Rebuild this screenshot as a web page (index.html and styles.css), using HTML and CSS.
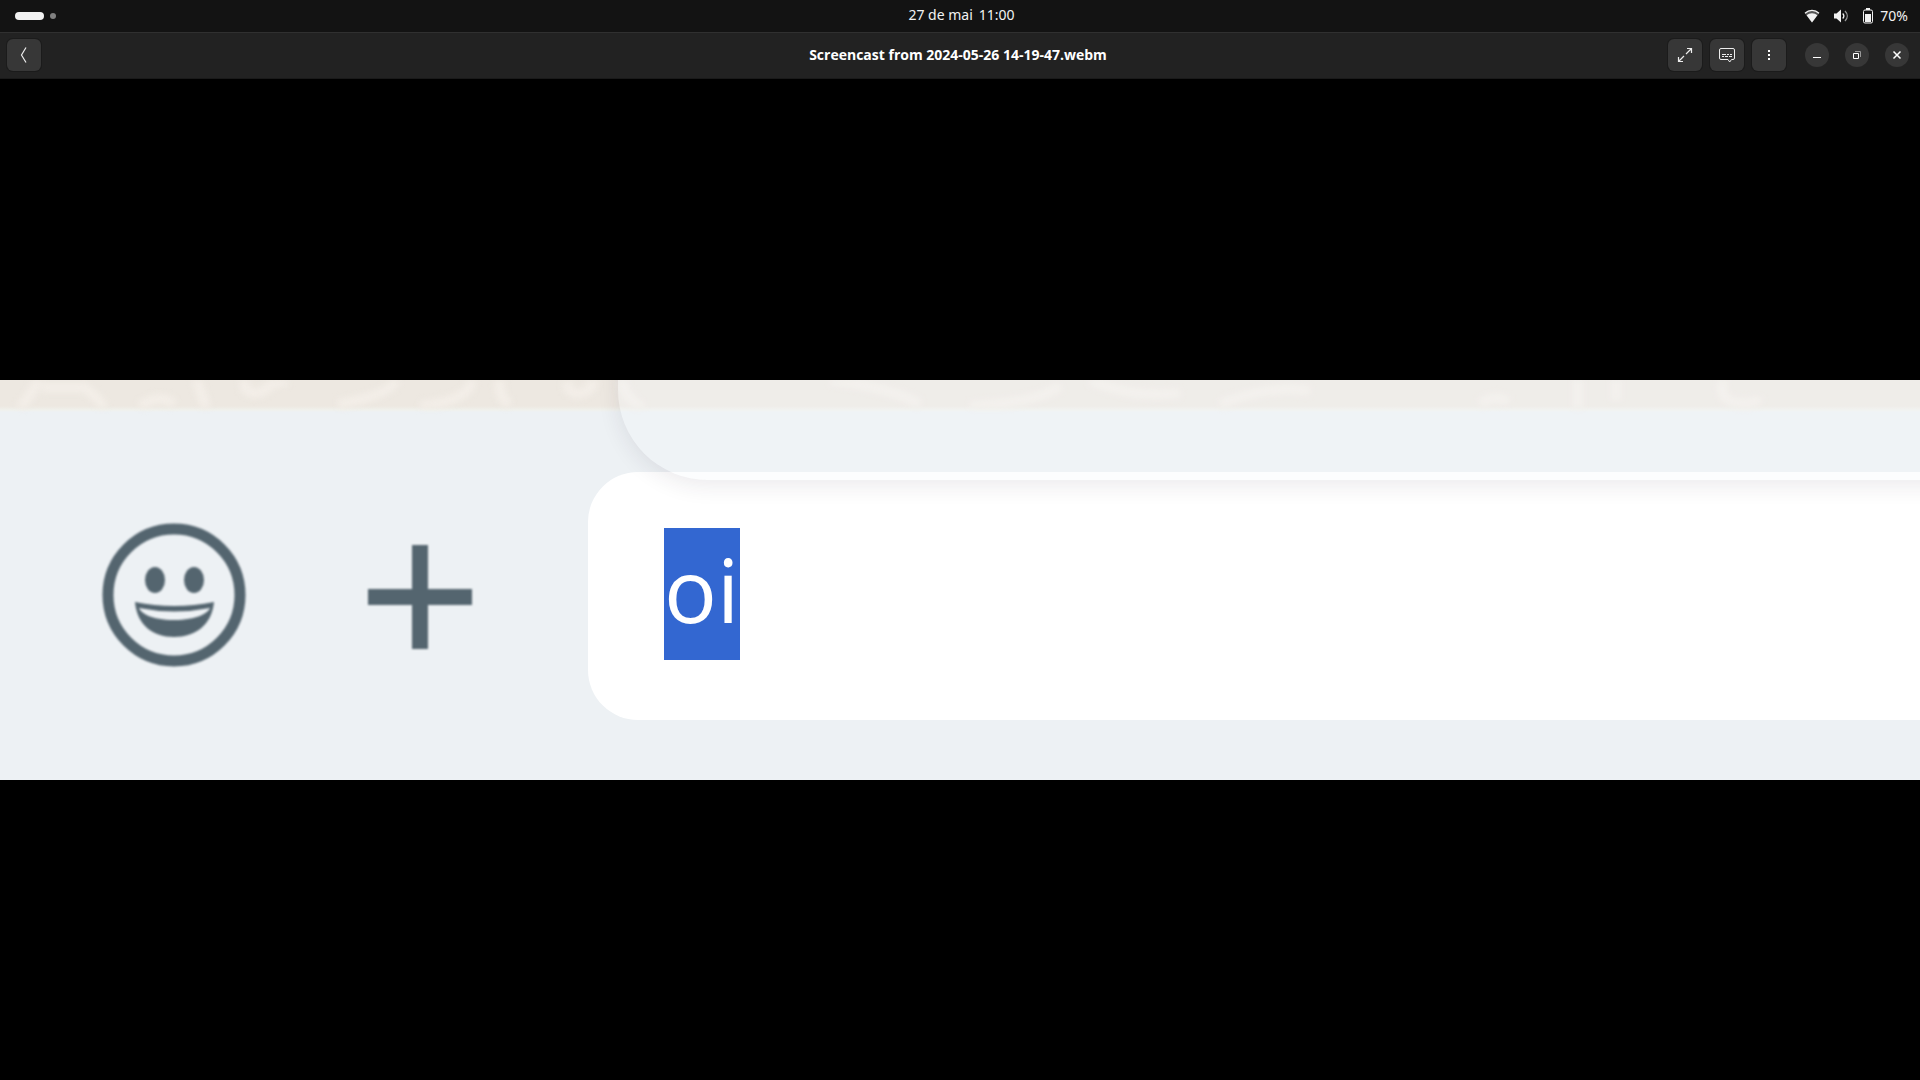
FILE: index.html
```html
<!DOCTYPE html>
<html lang="pt-BR">
<head>
    <meta charset="UTF-8" />
    <title>Screencast from 2024-05-26 14-19-47.webm</title>
    <meta name="viewport" content="width=device-width, initial-scale=1.0" />
    <link rel="stylesheet" href="styles.css">
</head>
<body>

    <div class="panel">
        <button class="workspaces" aria-label="Workspaces">
            <span class="pill"></span>
            <span class="dot"></span>
        </button>
        <button class="clock"><span>27 de mai</span><span>11:00</span></button>
        <button class="status" aria-label="System">
            <svg width="16" height="16" viewBox="0 0 16 16">
                <path d="M8 14.500.8 5.200C2.600 3 5.200 2 8 2s5.400 1 7.200 3.200z" fill="#555" />
                <path d="M8 14.500 2.600 7.200C4 6 6 5.200 8 5.200s4 .8 5.400 2z" fill="#f2f2f2" />
                <path d="M1 5.200C5 1.500 11 1.500 15 5.200" fill="none" stroke="#f2f2f2" stroke-width="1.300" />
            </svg>
            <svg width="16" height="16" viewBox="0 0 16 16">
                <path d="M1 5.500h2.500L8 1.500v13l-4.500-4H1z" fill="#f2f2f2" />
                <path d="M9.700 5.500c1.400 1.500 1.400 3.500 0 5" fill="none" stroke="#f2f2f2" stroke-width="1.300" />
                <path d="M12 3c3 3 3 7 0 10" fill="none" stroke="#999" stroke-width="1.300" />
            </svg>
            <svg width="12" height="16" viewBox="0 0 12 16">
                <path d="M4 0h4v2H4z" fill="#f2f2f2" />
                <rect x="1.500" y="2" width="9" height="13" rx="1.500" fill="none" stroke="#f2f2f2" />
                <path d="M3 6h6v8H3z" fill="#f2f2f2" />
            </svg>
            <span class="percent">70%</span>
        </button>
    </div>

    <header class="titlebar">
        <button class="tool" aria-label="Back">
            <svg width="16" height="16" viewBox="0 0 16 16">
                <path d="M10 0.500 5.500 8l4.500 7.500" fill="none" stroke="#eee" stroke-width="1.200" />
            </svg>
        </button>
        <h1>Screencast from 2024-05-26 14-19-47.webm</h1>
        <div class="actions">
            <button class="tool" aria-label="Fullscreen">
                <svg width="16" height="16" viewBox="0 0 16 16">
                    <path d="M9 7l5.500-5.500M10 1.500h4.500V6M7 9l-5.500 5.500M1.500 10v4.500H6" fill="none" stroke="#eee" stroke-width="1.200" />
                </svg>
            </button>
            <button class="tool" aria-label="Subtitles">
                <svg width="16" height="16" viewBox="0 0 16 16">
                    <path d="M2 1.500h12q1.500 0 1.500 1.500v8q0 1.500-1.500 1.500h-1.500L10.700 15 9 12.500H2Q.5 12.500.5 11V3Q.5 1.500 2 1.500z" fill="none" stroke="#eee" />
                    <path d="M3 7.500h4m1 0h2m1 0h2M3 9.500h2m1 0h3m1 0h3" stroke="#eee" />
                </svg>
            </button>
            <button class="tool" aria-label="Menu">
                <svg width="16" height="16" viewBox="0 0 16 16">
                    <path d="M7 3h2v2H7zM7 7h2v2H7zM7 11h2v2H7z" fill="#fff" />
                </svg>
            </button>
            <div class="window-controls">
                <button aria-label="Minimize">
                    <svg width="16" height="16" viewBox="0 0 16 16"><path d="M4 10h8v1H4z" fill="#fff" /></svg>
                </button>
                <button aria-label="Restore">
                    <svg width="16" height="16" viewBox="0 0 16 16">
                        <path d="M6 4.500h5.500V10" fill="none" stroke="#999" />
                        <path d="M4.500 6.500h5v5h-5z" fill="none" stroke="#fff" />
                    </svg>
                </button>
                <button aria-label="Close">
                    <svg width="16" height="16" viewBox="0 0 16 16"><path d="M4.500 4.500l7 7m0-7l-7 7" stroke="#fff" stroke-width="1.500" /></svg>
                </button>
            </div>
        </div>
    </header>

    <main class="player">
        <div class="video">
            <div class="wallpaper">
                <svg viewBox="0 0 1920 30" preserveAspectRatio="none">
                    <g fill="none" stroke="#f3eee8" stroke-width="10">
                        <path d="M20 30Q34 12 38 0M42 8h46M84 8Q98 18 104 30M140 28q20-14 34-2M196 0q6 14 10 30M244 0q0 14 10 14t14-6 20-6M338 26Q390 16 396 0M420 28Q470 22 472 0M500 0q-2 20 10 26M566 2q4 16 16 12t10-14" />
                        <path d="M622 0q2 20 22 30M830 0Q890 8 920 26M970 28Q1040 24 1060 6M1090 0q40 20 90 14M1220 26q50-22 90-14M1480 26q16-12 28-2M1578 0v30M1616 0v22M1724 0q-8 20 12 24t22-6" />
                    </g>
                </svg>
            </div>
            <div class="composer">
                <div class="buttons">
                    <button aria-label="Emoji">
                        <svg width="148" height="148" viewBox="0 0 148 148" fill="#54656f">
                            <circle cx="74" cy="73" r="66" fill="none" stroke="#54656f" stroke-width="11" />
                            <ellipse cx="55" cy="58" rx="10" ry="13" />
                            <ellipse cx="94" cy="58" rx="10" ry="13" />
                            <path d="M35 80Q74 88 114 80C112 103 95 115 74 115S37 103 35 80zM39 86C41 91 51 98 74 98S108 91 110 86Q74 93 39 86z" fill-rule="evenodd" />
                        </svg>
                    </button>
                    <button aria-label="Attach">
                        <svg width="112" height="112" viewBox="0 0 112 112">
                            <path d="M48 5h16v44h44v16H64v44H48V65H4V49h44z" fill="#54656f" />
                        </svg>
                    </button>
                </div>
                <label class="field">
                    <input class="message" type="text" value="oi" aria-label="Message" spellcheck="false" autocomplete="off">
                </label>
            </div>
            <div class="popup"></div>
        </div>
    </main>

    <script>
        const message = document.querySelector('.message');
        message.focus();
        message.select();
    </script>

</body>
</html>
```
FILE: styles.css
```css
* {
    box-sizing: border-box;
    margin: 0;
    padding: 0;
}

body {
    font-family: "Noto Sans", sans-serif;
    background: #000;
    color: #f2f2f2;
    min-height: 100vh;
    display: flex;
    flex-direction: column;
}

button {
    background: none;
    border: none;
    color: inherit;
    font: inherit;
    display: flex;
    align-items: center;
    justify-content: center;
}

/* Top panel */
.panel {
    display: grid;
    grid-template-columns: 1fr auto 1fr;
    align-items: center;
    height: 32px;
    padding: 0 12px 0 15px;
    background: #131313;
    font-size: 14px;
    line-height: 20px;
}

.workspaces {
    justify-self: start;
    gap: 6px;
}

.pill {
    width: 29px;
    height: 8px;
    border-radius: 4px;
    background: #f2f2f2;
}

.dot {
    width: 6px;
    height: 6px;
    border-radius: 50%;
    background: #808080;
}

.clock {
    gap: 6px;
    padding-bottom: 2px;
}

.status {
    justify-self: end;
    gap: 13px;
}

.percent {
    margin-left: -7px;
}

/* Player header */
.titlebar {
    display: grid;
    grid-template-columns: 1fr auto 1fr;
    align-items: center;
    height: 47px;
    padding: 0 11px 2px 7px;
    background: #222;
    border-top: 1px solid #303030;
    border-bottom: 1px solid #1a1a1a;
}

h1 {
    font-family: "Open Sans", sans-serif;
    font-size: 14px;
    font-weight: 700;
    line-height: 20px;
    color: #fff;
}

.tool {
    width: 34px;
    height: 32px;
    border-radius: 6px;
    background: #373737;
    box-shadow: 0 0 0 1px #1b1b1b;
}

.actions {
    display: flex;
    align-items: center;
    justify-self: end;
    gap: 8px;
}

.window-controls {
    display: flex;
    gap: 16px;
    margin-left: 11px;
}

.window-controls button {
    width: 24px;
    height: 24px;
    border-radius: 50%;
    background: #373737;
}

/* Video frame */
.player {
    flex: 1;
    display: flex;
    align-items: center;
}

.video {
    position: relative;
    display: flex;
    flex-direction: column;
    width: 100%;
    aspect-ratio: 24 / 5;
    overflow: hidden;
    background: #edf1f4;
}

.wallpaper {
    height: 32px;
    background: linear-gradient(#ede8e1 26px, #f0f1ec 30px, #edf1f4);
}

.wallpaper svg {
    display: block;
    width: 100%;
    height: 28px;
    filter: blur(3px);
}

.composer {
    flex: 1;
    display: flex;
    align-items: center;
    gap: 112px;
    padding-left: 100px;
}

.buttons {
    display: flex;
    align-items: center;
    gap: 116px;
}

.buttons svg {
    filter: blur(1px);
}

.field {
    flex: 1;
    display: flex;
    align-items: center;
    height: 248px;
    padding: 0 76px 4px;
    border-radius: 50px 0 0 50px;
    background: #fff;
}

/* Hugs its text, so the highlight fills the whole line */
.message {
    width: 76px;
    height: 132px;
    padding-bottom: 10px;
    border: none;
    outline: none;
    background: #3367d1;
    font-family: "Open Sans", sans-serif;
    font-size: 88px;
    line-height: 120px;
    color: #fff;
}

.message::selection {
    background: #3367d1;
    color: #fff;
}

/* Translucent menu hanging over the message box */
.popup {
    position: absolute;
    top: -200px;
    right: -100px;
    bottom: 300px;
    left: 618px;
    border-radius: 90px;
    background: rgba(246, 250, 252, 0.3);
    box-shadow: 0 6px 22px rgba(40, 30, 50, 0.09);
    pointer-events: none;
}
```
